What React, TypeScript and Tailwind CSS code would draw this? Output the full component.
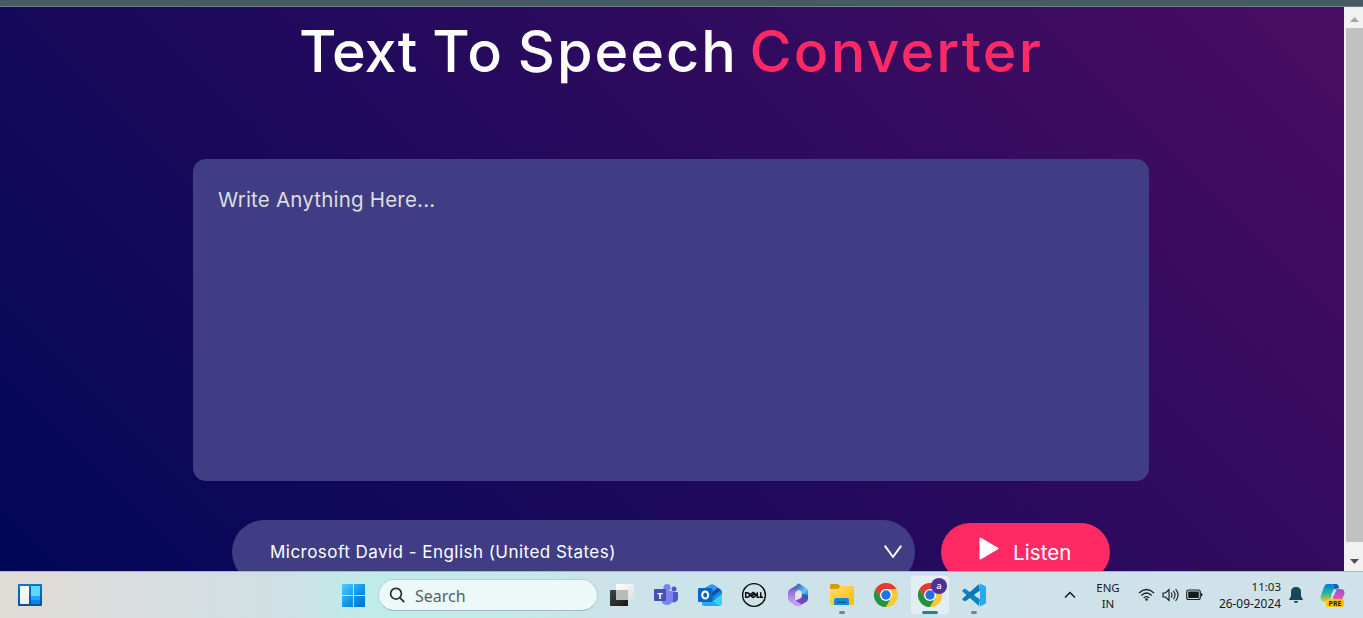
import React from "react";

function Scrollbar() {
  return (
    <div className="flex w-[19px] flex-col bg-[#f1f1f1]">
      <div className="flex h-[21px] items-center justify-center pt-[3px] pl-[2px]">
        <svg width="9" height="5" viewBox="0 0 9 5"><path d="M0 5 4.5 0 9 5Z" fill="#a3a3a3" /></svg>
      </div>
      <div className="ml-[2px] h-[514px] bg-[#c1c1c1]" />
      <div className="flex flex-1 items-center justify-center pt-[9px] pl-[2px]">
        <svg width="9" height="5" viewBox="0 0 9 5"><path d="M0 0 4.5 5 9 0Z" fill="#505050" /></svg>
      </div>
    </div>
  );
}

function Converter() {
  return (
    <main className="flex h-[564px] w-[1344px] flex-col items-center overflow-hidden bg-[linear-gradient(45deg,#010758,#490d61)] pr-[2px] font-['Inter',sans-serif]">
      <h1 className="flex h-[88px] w-[744px] shrink-0 items-center text-[57.5px] leading-[88px] font-medium whitespace-nowrap text-white">
        <span className="w-[134px]">Text</span>
        <span className="w-[86px] tracking-[2px]">To</span>
        <span className="w-[233px] tracking-[2px]">Speech</span>
        <span className="tracking-[2.1px] text-[#ff2963]">Converter</span>
      </h1>
      <div className="mt-[64px] h-[322px] w-[956px] shrink-0 rounded-[13px] bg-[#403d84] px-[25px] pt-[25px] text-[20.5px] leading-8 text-[#ddd]">
        <span className="tracking-[0.2px]">Write Anything Here...</span>
      </div>
      <div className="mt-[39px] flex w-[878px] shrink-0 items-start justify-between">
        <div className="flex h-16 w-[683px] items-center justify-between rounded-full bg-[#403d84] pr-[13px] pl-[38px] text-[17px] tracking-[0.47px] text-white">
          <span className="mt-[2px]">Microsoft David - English (United States)</span>
          <svg width="18" height="14" viewBox="0 0 18 14" fill="none" stroke="#fff" strokeWidth="2" strokeLinecap="round" strokeLinejoin="round"><path d="M1.3 1.3 9 12 16.7 1.3" /></svg>
        </div>
        <button className="mt-[3px] flex h-[58px] w-[169px] items-center rounded-full bg-[#ff2963] pl-[38px] text-white">
          <svg className="mb-[7px]" width="20" height="23" viewBox="0 0 20 23"><path d="M1.5 1.5 18.5 11.5 1.5 21.5Z" fill="#fff" stroke="#fff" strokeWidth="2" strokeLinejoin="round" /></svg>
          <span className="mt-[2px] ml-[14px] text-[20.5px] tracking-[0.1px]">Listen</span>
        </button>
      </div>
    </main>
  );
}

function Widgets() {
  return (
    <svg width="24" height="22" viewBox="0 0 24 22">
      <defs>
        <linearGradient id="wg" x2="0" y2="1"><stop stopColor="#0878d0" /><stop offset="1" stopColor="#07529b" /></linearGradient>
        <linearGradient id="ww" x2="0" y2="1"><stop stopColor="#fff" /><stop offset="1" stopColor="#eee" /></linearGradient>
      </defs>
      <rect width="24" height="22" rx=".7" fill="url(#wg)" />
      <rect x="2" y="2" width="9" height="18" rx=".5" fill="url(#ww)" />
      <path d="M13 2h9v10h-9z" fill="#63d5ff" /><path d="M13 12h9v4h-9z" fill="#20a4fa" /><path d="M13 16h9v4h-9z" fill="#0786e8" />
    </svg>
  );
}

function Windows() {
  return (
    <svg className="mt-px" width="23" height="23" viewBox="0 0 24 24">
      <defs><linearGradient id="win" x2="1" y2="1"><stop stopColor="#4cceff" /><stop offset=".6" stopColor="#0a90e4" /><stop offset="1" stopColor="#0070cf" /></linearGradient></defs>
      <path d="M.5 0H11.4V11.4H0V.5ZM12.4 0H23.5L24 .5V11.4H12.4ZM0 12.4H11.4V24H.5L0 23.5ZM12.4 12.4H24V23.5L23.5 24H12.4Z" fill="url(#win)" />
    </svg>
  );
}

function TaskView() {
  return (
    <svg width="24" height="24" viewBox="0 0 24 24">
      <defs>
        <linearGradient id="td" x2="1" y2="1"><stop stopColor="#444" /><stop offset="1" stopColor="#181818" /></linearGradient>
        <linearGradient id="tl" x2="1" y2="1"><stop stopColor="#fff" /><stop offset="1" stopColor="#ddd" /></linearGradient>
      </defs>
      <rect y="7" width="18" height="16" rx=".6" fill="url(#td)" />
      <rect x="6" y="1" width="18" height="16" rx=".6" fill="url(#tl)" />
      <path d="M6 7h12v10H6z" fill="#b9bbbb" />
    </svg>
  );
}

function Teams() {
  return (
    <svg width="24" height="24" viewBox="0 0 24 24">
      <circle cx="20" cy="6" r="2.5" fill="#5059c9" /><circle cx="13" cy="4.5" r="3.6" fill="#7b83eb" />
      <path d="M17 9h6q1 0 1 1v5a4 4 0 0 1-7 3Z" fill="#5059c9" />
      <path d="M8 8h10q1 0 1 1v7a6 6 0 0 1-12 0Z" fill="#7b83eb" />
      <rect y="6" width="12" height="12" rx="1" fill="#464eb8" />
      <text x="6" y="15.5" textAnchor="middle" className="font-['Open_Sans',sans-serif] text-[9.5px] font-bold" fill="#fff">T</text>
    </svg>
  );
}

function Outlook() {
  return (
    <svg width="24" height="24" viewBox="0 0 24 24">
      <path d="m4 7 8-5q2-1 4 0l7 5q1 1 1 2v5l-10 5-10-6Z" fill="#1270c8" />
      <path d="m4 7 8-5q2-1 4 0l4 3-9 7Z" fill="#2d9cf0" />
      <path d="m11 11 9-6 3 2-9 8Z" fill="#0a4fae" />
      <path d="m14 14 9-7q1 1 1 3v3l-9 6Z" fill="#1b8be0" />
      <path d="m24 11-14 11 2 1h10q2 0 2-2Z" fill="#38d2f6" /><path d="m4 19 9-2 9 6H6q-2 0-2-2Z" fill="#22aeec" />
      <rect y="5" width="14.5" height="14" rx="1.2" fill="#0b66c3" /><ellipse cx="7.2" cy="12" rx="3" ry="3.5" fill="none" stroke="#fff" strokeWidth="2" />
    </svg>
  );
}

function Dell() {
  return (
    <svg width="26" height="26" viewBox="0 0 26 26">
      <circle cx="13" cy="13" r="11.4" fill="none" stroke="#080808" strokeWidth="1.4" />
      <path d="M4.7 10.7h1.2q2.6 0 2.6 2.3t-2.6 2.3H4.7ZM8.6 12.9l3.7-2.4 3.2 2.4-3.2 2.6ZM10.5 13.8l3.7-2.3M16.3 10.2v5.1h2.3M19.7 10.2v5.1H22" fill="none" stroke="#080808" strokeWidth="1.5" />
    </svg>
  );
}

function Microsoft365() {
  return (
    <svg width="24" height="24" viewBox="0 0 24 24">
      <defs>
        <linearGradient id="ma" x2="0" y2="1"><stop stopColor="#394b98" /><stop offset=".4" stopColor="#8b73db" /><stop offset="1" stopColor="#d698e6" /></linearGradient>
        <linearGradient id="mb" x2="1" y2="1"><stop stopColor="#305db9" /><stop offset=".6" stopColor="#64c7f1" /><stop offset="1" stopColor="#235abb" /></linearGradient>
      </defs>
      <path d="M13 1 5 5.5Q2 7 2 10v5q0 3 3 4 3 1 4-2V10.500q0-1.500 1.500-2.500L13 6.500Z" fill="url(#ma)" />
      <path d="m11 1 2-.5 7 4.5q2 1 2 4v6l-6-3v-2q0-1.500-1.500-2.500L11 6Z" fill="url(#mb)" />
      <path d="M4 18.5q3 1 5-.5l6-3 1-4 6 2.500v2q0 2.500-2 3.500l-6 3.500q-2 1-4 0Z" fill="#7646bd" />
      <path d="M4 18.500q3 .5 5-1l7 4-2 1.200q-2 1-4 0Z" fill="#c79af3" /><path d="m16 10.500 6 2v4l-6-2.500Z" fill="#315db7" />
      <path d="m12.500 8.500 3 1.800v3.600l-3 1.800-3-1.800v-3.600Z" fill="#dfe8f2" />
    </svg>
  );
}

function Folder() {
  return (
    <svg width="24" height="24" viewBox="0 0 24 24">
      <defs><linearGradient id="fd" x2="1" y2="1"><stop stopColor="#ffe078" /><stop offset="1" stopColor="#ffb900" /></linearGradient></defs>
      <path d="M0 2.5Q0 1 1.5 1H8l2 2h12.5Q24 3 24 4.5V12H0Z" fill="#d99a08" />
      <path d="M0 6h8l3-3h11.5Q24 3 24 4.5v16Q24 22 22.5 22h-21Q0 22 0 20.5Z" fill="url(#fd)" />
      <path d="M4 22v-5q0-2 2-2h11q2 0 2 2v5Z" fill="#1688d6" /><path d="M7 18.5h9v1.5H7z" fill="#075a9e" />
    </svg>
  );
}

function Chrome() {
  return (
    <svg width="24" height="24" viewBox="0 0 24 24">
      <circle cx="12" cy="12" r="12" fill="#fcc934" />
      <path d="M1.6 6A12 12 0 0 1 22.4 6H12L6.8 15Z" fill="#e33b2e" />
      <path d="M1.6 6A12 12 0 0 0 12 24l5.2-9H6.8Z" fill="#229342" />
      <path d="M12 6h10.4A12 12 0 0 1 12 24l5.2-9Z" fill="#fcc934" />
      <circle cx="12" cy="12" r="6" fill="#fff" /><circle cx="12" cy="12" r="4.7" fill="#1a73e8" />
    </svg>
  );
}

function VsCode() {
  return (
    <svg width="24" height="24" viewBox="0 0 24 24">
      <path d="m2 6-2 2 17 15 1-6.5L4 6.3Q3 5.5 2 6Z" fill="#0d83c5" />
      <path d="m2 18-2-2L17 1l1 6.5L4 17.7q-1 .8-2 .3Z" fill="#0878b7" />
      <path d="m17 0 6 3q1 .5 1 2v14q0 1.5-1 2l-6 3q1-.5 1-2V2q0-1.5-1-2Z" fill="#29a8ed" />
    </svg>
  );
}

function AppIcon({ children, running }: { children: React.ReactNode; running?: boolean }) {
  return (
    <div className="relative flex h-[46px] w-11 items-center justify-center">
      {children}
      {running && <span className="absolute bottom-[4px] h-[3px] w-1.5 rounded-full bg-[#768387]" />}
    </div>
  );
}

function Tray() {
  return (
    <div className="ml-auto flex h-full items-center text-[#161a1b]">
      <svg width="12" height="8" viewBox="0 0 12 8" fill="none" stroke="currentColor" strokeWidth="1.5"><path d="m1 6.5 5-5 5 5" /></svg>
      <div className="mt-[2px] ml-[19px] flex w-[26px] flex-col items-center text-[11.5px] leading-4"><div>ENG</div><div>IN</div></div>
      <svg className="ml-[17px]" width="17" height="14" viewBox="0 0 17 14" fill="none" stroke="currentColor" strokeWidth="1.2"><path d="M1 5q7.5-7 15 0M3.3 7.5q5.2-5 10.4 0M5.7 10q2.8-2.7 5.6 0" /><circle cx="8.5" cy="11.5" r="1.2" fill="currentColor" stroke="none" /></svg>
      <svg className="ml-[7px]" width="18" height="14" viewBox="0 0 18 14" fill="none" stroke="currentColor" strokeWidth="1.1"><path d="M1 5h2.5L7 1.5v11L3.500 9H1ZM9 4.500q2 2.500 0 5M11.300 2.800q3.500 4.200 0 8.400M13.600 1.200q5 5.800 0 11.600" /></svg>
      <svg className="ml-[6px]" width="17" height="12" viewBox="0 0 17 12"><rect x=".7" y="1" width="13.6" height="9.5" rx="2" fill="none" stroke="currentColor" strokeWidth="1.1" /><rect x="2.2" y="2.5" width="10.6" height="6.5" rx=".5" fill="currentColor" /><path d="M15 4q1.5 0 1.5 1.7T15 7.5Z" fill="currentColor" /></svg>
      <div className="ml-[14px] w-[64px] text-right text-[11.9px] leading-4 whitespace-nowrap"><div className="text-[11.5px]">11:03</div><div>26-09-2024</div></div>
      <svg className="ml-[8px]" width="14" height="16" viewBox="0 0 14 16" fill="#164857"><path d="M7 0Q12 0 12 5v4l2 4H0l2-4V5Q2 0 7 0ZM4.7 14h4.6Q9 16 7 16t-2.3-2Z" /></svg>
      <svg className="ml-[17px]" width="25" height="25" viewBox="0 0 25 25">
        <defs>
          <linearGradient id="ca" x2="0" y2="1"><stop stopColor="#087bd7" /><stop offset=".5" stopColor="#24b5a0" /><stop offset="1" stopColor="#f2c529" /></linearGradient>
          <linearGradient id="cb" x2="0" y2="1"><stop stopColor="#8c55db" /><stop offset=".6" stopColor="#df58a7" /><stop offset="1" stopColor="#fb8064" /></linearGradient>
        </defs>
        <path d="M7 1h9q2 0 3 4l-5 1-4 11q-1 2-4 2-7 0-5-7L4 4q1-3 3-3Z" fill="url(#ca)" />
        <path d="m14 7 2-1h4q6 0 4 6l-2 5q-1 3-5 3H9q3-1 4-5Z" fill="url(#cb)" />
        <path d="M14 1h2q2 0 3 4l-4 1q-2-2-1-5Z" fill="#145ac4" />
        <path d="m12.5 9 2-2.5h3q-1 0-2 2l-1.5 4h-3Z" fill="#d4e5eb" />
        <rect x="6" y="16" width="18" height="8" rx="2" fill="#ffc20d" />
        <text x="15" y="22.7" textAnchor="middle" className="font-['Open_Sans',sans-serif] text-[7px] font-bold" fill="#201d12">PRE</text>
      </svg>
    </div>
  );
}

function Taskbar() {
  return (
    <footer className="flex h-[47px] items-center border-t border-[#aab4bf] bg-[linear-gradient(90deg,#dfdbd6_0px,#d8dddf_150px,#d0dfe3_270px,#c3e8e8_340px,#bfece8_390px,#c4e9e8_500px,#cbe3e8_600px,#cee2e9_1000px,#d0e2e9_1363px)] pr-[18px] pl-[18px] font-['Noto_Sans',sans-serif]">
      <Widgets />
      <div className="ml-[289px]"><AppIcon><Windows /></AppIcon></div>
      <div className="mb-px ml-[3px] flex h-8 w-[220px] items-center rounded-full border border-[#b3d0d3] border-b-[#9dbabf] bg-[#edf8f9] pl-[10px]">
        <svg width="16" height="16" viewBox="0 0 16 16" fill="none" stroke="#252c2d" strokeWidth="1.7"><circle cx="7" cy="6.7" r="5.4" /><path d="m10.8 10.6 4 4" strokeLinecap="round" /></svg>
        <span className="mt-[2px] ml-[10px] text-[16px] leading-none text-[#566062]">Search</span>
      </div>
      <div className="ml-[2px] flex">
        <AppIcon><TaskView /></AppIcon>
        <AppIcon><Teams /></AppIcon>
        <AppIcon><Outlook /></AppIcon>
        <AppIcon><Dell /></AppIcon>
        <AppIcon><Microsoft365 /></AppIcon>
        <AppIcon running><Folder /></AppIcon>
        <AppIcon><Chrome /></AppIcon>
        <div className="relative flex h-[46px] w-11 items-center justify-center">
          <div className="flex h-[38px] w-[38px] items-center justify-center rounded-[3px] border border-[#e7eff2] bg-[#e4edf2]"><Chrome /></div>
          <span className="absolute top-[6px] left-[23px] flex h-4 w-4 items-center justify-center rounded-full bg-[#50309a] text-[9.5px] leading-none font-medium text-white">a</span>
          <span className="absolute bottom-[4px] h-[3px] w-4 rounded-full bg-[#21838d]" />
        </div>
        <AppIcon running><VsCode /></AppIcon>
      </div>
      <Tray />
    </footer>
  );
}

export default function App() {
  return (
    <div className="flex h-[618px] w-[1363px] flex-col overflow-hidden">
      <div className="h-[7px] border-b border-[#718087] bg-[#455a63]" />
      <div className="flex h-[564px]">
        <Converter />
        <Scrollbar />
      </div>
      <Taskbar />
    </div>
  );
}
